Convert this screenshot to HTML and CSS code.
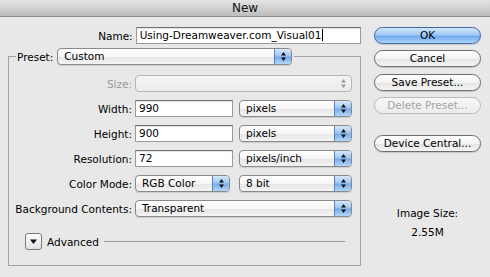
FILE: index.html
```html
<!DOCTYPE html>
<html>
  <head>
    <meta charset="utf-8" />
    <link rel="stylesheet" href="styles.css">
    <title>New</title>
  </head>
  <body>
    <div class="titlebar">New</div>

    <div class="dialog">
      <div class="form">
        <div class="name-row">
          <label class="label name-label">Name:</label>
          <div class="textbox name-box">Using-Dreamweaver.com_Visual01<span class="caret"></span></div>
        </div>

        <fieldset class="preset">
          <legend class="preset-legend">
            <span class="label">Preset:</span>
            <div class="popup preset-popup">
              <span class="popup-value">Custom</span>
              <span class="stepper"><svg width="7" height="11" viewBox="0 0 7 11"><path d="M3.5 1 L6 4.5 L1 4.5 Z M1 6.5 L6 6.5 L3.5 10 Z" fill="#111"/></svg></span>
            </div>
          </legend>

          <div class="row">
            <span class="label disabled-text">Size:</span>
            <div class="popup full disabled">
              <span class="popup-value"></span>
              <span class="stepper"><svg width="7" height="11" viewBox="0 0 7 11"><path d="M3.5 1 L6 4.5 L1 4.5 Z M1 6.5 L6 6.5 L3.5 10 Z" fill="#9a9a9a"/></svg></span>
            </div>
          </div>

          <div class="row">
            <span class="label">Width:</span>
            <div class="pair">
              <div class="textbox">990</div>
              <div class="popup">
                <span class="popup-value">pixels</span>
                <span class="stepper"><svg width="7" height="11" viewBox="0 0 7 11"><path d="M3.5 1 L6 4.5 L1 4.5 Z M1 6.5 L6 6.5 L3.5 10 Z" fill="#111"/></svg></span>
              </div>
            </div>
          </div>

          <div class="row">
            <span class="label">Height:</span>
            <div class="pair">
              <div class="textbox">900</div>
              <div class="popup">
                <span class="popup-value">pixels</span>
                <span class="stepper"><svg width="7" height="11" viewBox="0 0 7 11"><path d="M3.5 1 L6 4.5 L1 4.5 Z M1 6.5 L6 6.5 L3.5 10 Z" fill="#111"/></svg></span>
              </div>
            </div>
          </div>

          <div class="row">
            <span class="label">Resolution:</span>
            <div class="pair">
              <div class="textbox">72</div>
              <div class="popup">
                <span class="popup-value">pixels/inch</span>
                <span class="stepper"><svg width="7" height="11" viewBox="0 0 7 11"><path d="M3.5 1 L6 4.5 L1 4.5 Z M1 6.5 L6 6.5 L3.5 10 Z" fill="#111"/></svg></span>
              </div>
            </div>
          </div>

          <div class="row">
            <span class="label">Color Mode:</span>
            <div class="pair">
              <div class="popup mode-popup">
                <span class="popup-value">RGB Color</span>
                <span class="stepper"><svg width="7" height="11" viewBox="0 0 7 11"><path d="M3.5 1 L6 4.5 L1 4.5 Z M1 6.5 L6 6.5 L3.5 10 Z" fill="#111"/></svg></span>
              </div>
              <div class="popup">
                <span class="popup-value">8 bit</span>
                <span class="stepper"><svg width="7" height="11" viewBox="0 0 7 11"><path d="M3.5 1 L6 4.5 L1 4.5 Z M1 6.5 L6 6.5 L3.5 10 Z" fill="#111"/></svg></span>
              </div>
            </div>
          </div>

          <div class="row">
            <span class="label">Background Contents:</span>
            <div class="popup full">
              <span class="popup-value">Transparent</span>
              <span class="stepper"><svg width="7" height="11" viewBox="0 0 7 11"><path d="M3.5 1 L6 4.5 L1 4.5 Z M1 6.5 L6 6.5 L3.5 10 Z" fill="#111"/></svg></span>
            </div>
          </div>

          <div class="advanced">
            <span class="disclosure"><svg width="9" height="7" viewBox="0 0 9 7"><path d="M1 1.5 L8 1.5 L4.5 6 Z" fill="#111"/></svg></span>
            <span class="advanced-text">Advanced</span>
            <span class="rule"></span>
          </div>
        </fieldset>
      </div>

      <div class="buttons">
        <button type="button" class="btn btn-default">OK</button>
        <button type="button" class="btn">Cancel</button>
        <button type="button" class="btn btn-save">Save Preset...</button>
        <button type="button" class="btn btn-disabled">Delete Preset...</button>
        <button type="button" class="btn btn-device">Device Central...</button>

        <div class="image-size">
          <p>Image Size:</p>
          <p>2.55M</p>
        </div>
      </div>
    </div>
  </body>
</html>
```

FILE: styles.css
```css
body {
  margin: 0;
  width: 490px;
  height: 277px;
  overflow: hidden;
  background-color: #e8e8e8;
  font-family: "DejaVu Sans", sans-serif;
  font-size: 10.5px;
  color: #000;
}

.titlebar {
  height: 16px;
  line-height: 17px;
  text-align: center;
  font-size: 12px;
  color: #111;
  background: linear-gradient(#e4e4e4, #bdbdbd);
  border-bottom: 1px solid #8c8c8c;
}

.dialog {
  display: flex;
  padding-left: 8px;
}

.form {
  width: 353px;
}

.label {
  white-space: nowrap;
}

.disabled-text {
  color: #9a9a9a;
}

.name-row {
  display: flex;
  align-items: center;
  margin-top: 10px;
}

.name-label {
  width: 125px;
  text-align: right;
  margin-right: 3px;
}

.textbox {
  box-sizing: border-box;
  height: 17px;
  line-height: 15px;
  padding-left: 3px;
  background-color: #fff;
  border: 1px solid #9a9a9a;
  border-top-color: #6f6f6f;
  box-shadow: inset 0 1px 1px rgba(0, 0, 0, 0.12);
  white-space: nowrap;
}

.name-box {
  width: 226px;
}

.caret {
  display: inline-block;
  width: 1px;
  height: 12px;
  margin-left: 1px;
  vertical-align: -2px;
  background-color: #000;
}

.preset {
  margin: 4px 0 0 0;
  padding: 0 7px 15px 7px;
  border: 1px solid #a2a2a2;
  min-width: 0;
}

.preset-legend {
  display: flex;
  align-items: center;
  padding: 0 2px 0 1px;
}

.preset-legend .label {
  margin-right: 4px;
}

.popup {
  box-sizing: border-box;
  display: flex;
  align-items: stretch;
  height: 17px;
  width: 113px;
  line-height: 15px;
  padding-left: 6px;
  border: 1px solid #8a8a8a;
  border-radius: 4px;
  background: linear-gradient(#ffffff, #f6f6f6 50%, #e6e6e6 55%, #f4f4f4);
  box-shadow: 0 1px 1px rgba(0, 0, 0, 0.12);
  white-space: nowrap;
}

.popup-value {
  flex: 1;
}

.stepper {
  width: 16px;
  display: flex;
  align-items: center;
  justify-content: center;
  border-left: 1px solid #5b7eb4;
  border-radius: 0 3px 3px 0;
  background: linear-gradient(#d6e8fc, #9cc6f2 48%, #74abea 52%, #b2d6fa);
}

.preset-popup {
  width: 235px;
}

.mode-popup {
  width: 95px;
  margin-right: 3px;
}

.full {
  width: 217px;
}

.disabled {
  border-color: #b6b6b6;
  background: linear-gradient(#f4f4f4, #ececec);
  box-shadow: none;
}

.disabled .stepper {
  border-left: none;
  background: none;
}

.row {
  display: flex;
  align-items: center;
  height: 17px;
  margin-top: 8px;
}

.preset-legend + .row {
  margin-top: 10px;
}

.row .label {
  width: 116px;
  text-align: right;
  margin-right: 3px;
  display: flex;
  justify-content: flex-end;
}

.pair {
  display: flex;
  gap: 6px;
}

.pair .textbox {
  width: 98px;
}

.advanced {
  display: flex;
  align-items: center;
  margin: 16px 8px 0 9px;
}

.disclosure {
  box-sizing: border-box;
  width: 17px;
  height: 17px;
  display: flex;
  align-items: center;
  justify-content: center;
  border: 1px solid #7a7a7a;
  border-radius: 3px;
  background: linear-gradient(#ffffff, #e2e2e2);
}

.advanced-text {
  margin-left: 5px;
}

.rule {
  flex: 1;
  height: 1px;
  margin-left: 5px;
  background-color: #9a9a9a;
}

.buttons {
  width: 107px;
  margin-left: 13px;
  padding-top: 10px;
  display: flex;
  flex-direction: column;
}

.btn {
  box-sizing: border-box;
  height: 17px;
  margin: 0 0 6px 0;
  padding: 0;
  font-family: "DejaVu Sans", sans-serif;
  font-size: 10.5px;
  line-height: 15px;
  color: #000;
  border: 1px solid #6e6e6e;
  border-radius: 9px;
  background: linear-gradient(#ffffff, #f4f4f4 50%, #e4e4e4 55%, #f6f6f6);
  box-shadow: 0 1px 1px rgba(0, 0, 0, 0.15);
}

.btn-default {
  border-color: #3f6aa6;
  background: linear-gradient(#d3e7fd, #9cc8f5 48%, #70aaee 54%, #a9d4fb);
}

.btn-save {
  margin-top: 1px;
}

.btn-disabled {
  color: #a4a4a4;
  border-color: #bcbcbc;
  background: linear-gradient(#f7f7f7, #ececec);
  box-shadow: none;
}

.btn-device {
  margin-top: 15px;
}

.image-size {
  margin-top: 49px;
  text-align: center;
}

.image-size p {
  margin: 0 0 6px 0;
  line-height: 13px;
}
```
